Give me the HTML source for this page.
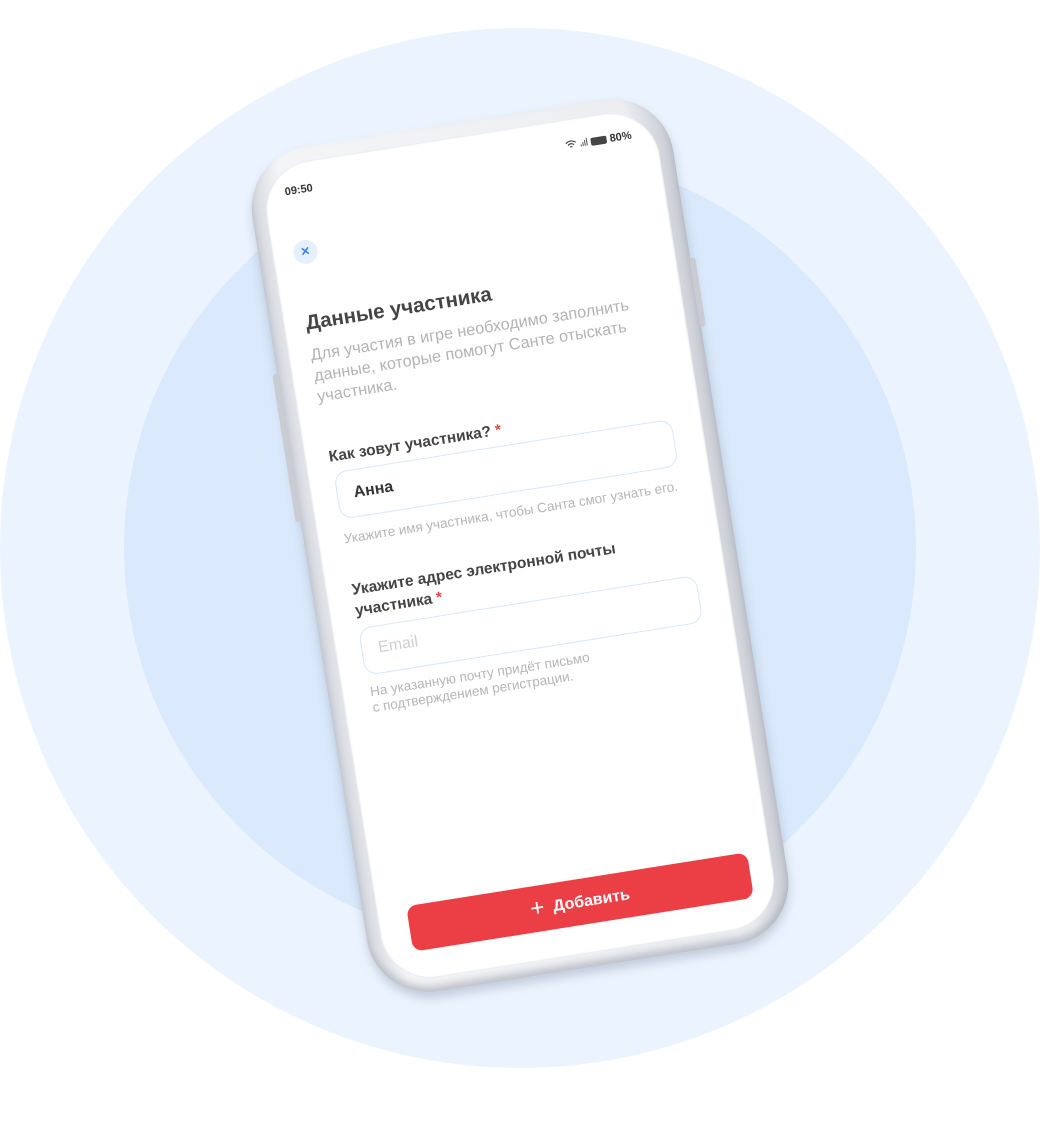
<!DOCTYPE html>
<html><head><meta charset="utf-8"><style>
*{margin:0;padding:0;box-sizing:border-box}
body{width:1041px;height:1132px;background:#fff;position:relative;overflow:hidden;font-family:"Liberation Sans",sans-serif}
.c1{position:absolute;left:0;top:28px;width:1040px;height:1040px;border-radius:50%;background:#ebf4fe}
.c2{position:absolute;left:124px;top:152px;width:792px;height:792px;border-radius:50%;background:#dae9fc}
.phone{position:absolute;left:307px;top:118px;width:426px;height:855px;transform:rotate(-9deg);transform-origin:213px 427px;border-radius:62px;background:linear-gradient(90deg,#d5d8de,#f4f5f7 8%,#eceef1 90%,#c9ccd3);box-shadow:0 6px 10px rgba(120,130,150,.35),inset 0 -6px 8px rgba(140,145,160,.5)}
.btnside{position:absolute;background:#c9ccd3;border-radius:3px}
.screen{position:absolute;left:14px;top:14px;right:14px;bottom:14px;border-radius:50px;background:#fff;box-shadow:inset 0 0 2px #c8ccd6}
.a{position:absolute;white-space:nowrap}
.t{color:#444;font-weight:bold}
.hint{color:#b5b5b5;font-size:13.5px}
.inp{position:absolute;left:26px;width:342px;height:48px;border:1.5px solid #d9e7fb;border-radius:13px}
.star{color:#e8434a}
</style></head><body>
<div class="c1"></div><div class="c2"></div>
<div class="phone">
 <div class="btnside" style="left:-5px;top:220px;width:6px;height:150px"></div>
 <div class="btnside" style="right:-5px;top:170px;width:6px;height:70px"></div>
 <div class="screen">
  <div class="a t" style="left:22px;top:22px;font-size:11px;color:#333">09:50</div>
  <div class="a" style="left:306px;top:20px;font-size:11px;font-weight:bold;color:#333">
   <svg width="12" height="9" viewBox="0 0 12 9" style="vertical-align:-1px"><path d="M1 3a7 7 0 0 1 10 0M3 5a4 4 0 0 1 6 0M5 7a1.5 1.5 0 0 1 2 0" stroke="#444" stroke-width="1.2" fill="none"/></svg>
   <svg width="8" height="9" viewBox="0 0 8 9"><path d="M1 9V7M3 9V5M5 9V3M7 9V1" stroke="#555" stroke-width="1"/></svg>
   <span style="display:inline-block;width:16px;height:8px;background:#444;border-radius:2px;vertical-align:-1px"></span> 80%</div>
  <div class="a" style="left:21px;top:78px;width:24px;height:24px;border-radius:50%;background:#e6f0fd;color:#3a86f0;font-size:15px;text-align:center;line-height:23px;font-weight:bold">×</div>
  <div class="a t" style="left:22px;top:149px;font-size:20.5px">Данные участника</div>
  <div class="a" style="left:22px;top:183px;font-size:16.3px;line-height:21px;color:#b3b3b3">Для участия в игре необходимо заполнить<br>данные, которые помогут Санте отыскать<br>участника.</div>
  <div class="a t" style="left:24px;top:288px;font-size:15.5px">Как зовут участника? <span class="star">*</span></div>
  <div class="inp" style="top:312px"><span class="a" style="left:16px;top:14px;font-size:16px;font-weight:bold;color:#333">Анна</span></div>
  <div class="a hint" style="left:26px;top:372px">Укажите имя участника, чтобы Санта смог узнать его.</div>
  <div class="a t" style="left:26px;top:421px;font-size:15.5px;line-height:21px">Укажите адрес электронной почты<br>участника <span class="star">*</span></div>
  <div class="inp" style="top:470px"><span class="a" style="left:16px;top:13px;font-size:16px;color:#d0d0d0">Email</span></div>
  <div class="a hint" style="left:28px;top:527px;line-height:16px">На указанную почту придёт письмо<br>с подтверждением регистрации.</div>
  <div class="a" style="left:30px;top:752px;width:345px;height:46px;border-radius:10px;background:#ec3f45;color:#fff;font-size:16px;font-weight:bold;text-align:center;line-height:46px"><span style="font-size:24px;font-weight:normal;vertical-align:-2px">+</span>&nbsp; Добавить</div>
 </div>
</div>
</body></html>
